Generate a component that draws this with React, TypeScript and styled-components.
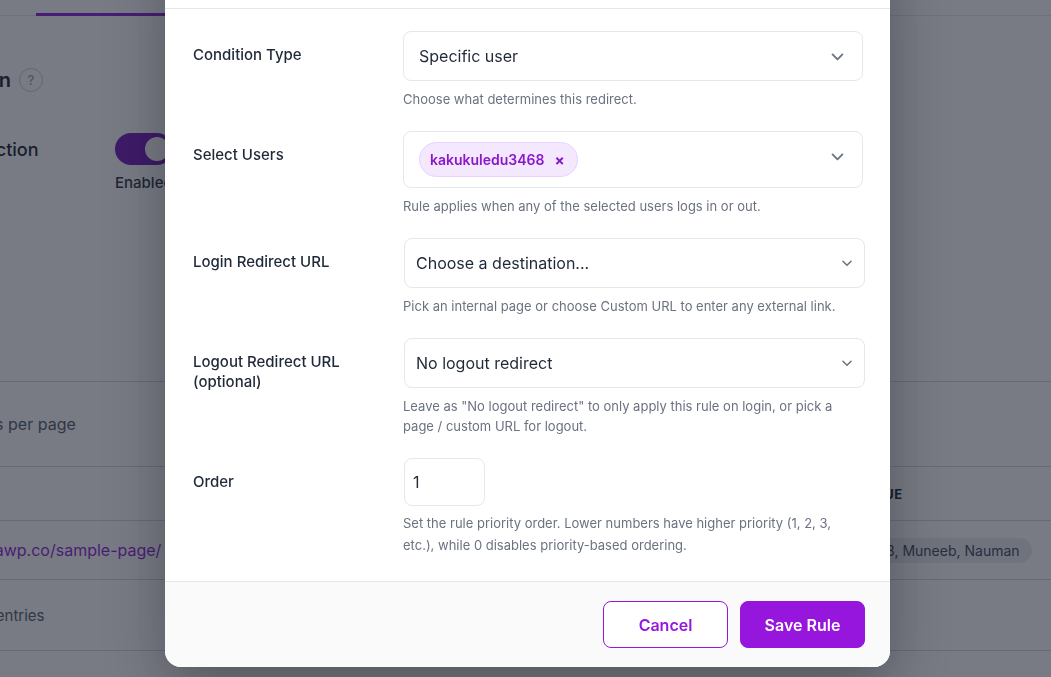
import React from 'react'
import styled, { createGlobalStyle } from 'styled-components'

const GlobalStyle = createGlobalStyle`
	* {
		box-sizing: border-box;
	}

	html,
	body {
		margin: 0;
		height: 100%;
		overflow: hidden;
	}

	body {
		font-family: Inter, 'Noto Sans', sans-serif;
		background: #fff;
		color: #1f2937;
	}
`

const purple = '#9616de'

const Page = styled.div`
	margin-left: -150px;
	width: calc(100% + 150px);
`

const TabBar = styled.div`
	margin-top: -30px;
	height: 46px;
	padding-left: 186px;
	display: flex;
	align-items: flex-end;
	border-bottom: 1px solid #e5e7eb;
`

const Tab = styled.div`
	width: 180px;
	padding-bottom: 10px;
	font-size: 15px;
	font-weight: 600;
	color: ${purple};
	border-bottom: 3px solid #8a14d9;
	margin-bottom: -1px;
`

const Settings = styled.section`
	padding: 50px 28px 0;
	height: 366px;
	border-bottom: 1px solid #d1d5db;
`

const SectionTitle = styled.h2`
	margin: 0;
	display: flex;
	align-items: center;
	gap: 8px;
	font-size: 20px;
	line-height: 28px;
	font-weight: 600;
	color: #111827;
`

const HelpDot = styled.span`
	width: 24px;
	height: 24px;
	border-radius: 50%;
	border: 1px solid #c7cbd3;
	color: #9ca3af;
	font-size: 13px;
	font-weight: 500;
	display: inline-flex;
	align-items: center;
	justify-content: center;
`

const SettingRow = styled.div`
	display: grid;
	grid-template-columns: 237px 1fr;
	margin-top: 39px;
`

const SettingLabel = styled.div`
	font-size: 18px;
	font-weight: 500;
	padding-top: 6px;
	color: #111827;
`

const ToggleBox = styled.div`
	display: flex;
	flex-direction: column;
	gap: 8px;
`

const Toggle = styled.span<{ $on: boolean }>`
	width: 58px;
	height: 32px;
	border-radius: 16px;
	background: ${p => (p.$on ? '#6d10b8' : '#d1d5db')};
	display: flex;
	align-items: center;
	justify-content: ${p => (p.$on ? 'flex-end' : 'flex-start')};
	padding: 0 4px;

	&::after {
		content: '';
		width: 24px;
		height: 24px;
		border-radius: 50%;
		background: #fff;
	}
`

const ToggleText = styled.span`
	font-size: 15px;
	font-weight: 500;
	color: #1f2937;
`

const PerPage = styled.div`
	height: 85px;
	padding: 0 28px;
	display: flex;
	align-items: center;
	font-size: 16px;
	color: #4b5563;
	border-bottom: 1px solid #d1d5db;
`

const TableRow = styled.div<{ $head?: boolean }>`
	display: grid;
	grid-template-columns: 967px 1fr;
	align-items: center;
	height: ${p => (p.$head ? '54px' : '59px')};
	padding: 0 28px;
	border-bottom: 1px solid #d1d5db;
	font-size: ${p => (p.$head ? '13px' : '15px')};
	font-weight: ${p => (p.$head ? 700 : 400)};
	letter-spacing: ${p => (p.$head ? '0.04em' : '0')};
	color: #111827;
`

const HeadCell = styled.span<{ $inset?: boolean }>`
	padding-left: ${p => (p.$inset ? '12px' : '0')};
`

const UrlLink = styled.a`
	color: #8a14d9;
	text-decoration: none;
	font-size: 16px;
	padding-left: 4px;
`

const ValuePill = styled.span`
	justify-self: start;
	padding: 4px 12px;
	border-radius: 13px;
	background: #e9ebef;
	font-size: 14px;
	color: #374151;
	white-space: nowrap;
`

const TableFooter = styled.div`
	height: 71px;
	padding: 0 28px;
	display: flex;
	align-items: center;
	font-size: 15px;
	color: #4b5563;
	border-bottom: 1px solid #d1d5db;
`

const Overlay = styled.div`
	position: fixed;
	inset: 0;
	background: rgba(30, 35, 50, 0.6);
	display: flex;
	justify-content: center;
	align-items: flex-end;
	padding: 0 0 10px 4px;
`

const Modal = styled.div`
	width: 725px;
	flex-shrink: 0;
	background: #fff;
	border-radius: 16px;
	overflow: hidden;
	display: flex;
	flex-direction: column;
	box-shadow: 0 20px 60px rgba(0, 0, 0, 0.3);
`

const ModalHeader = styled.div`
	height: 64px;
	padding: 0 28px;
	display: flex;
	align-items: center;
	justify-content: space-between;
	border-bottom: 1px solid #e5e7eb;
	font-size: 20px;
	font-weight: 600;
`

const ModalBody = styled.div`
	padding: 22px 27px 25px 28px;
	display: grid;
	grid-template-columns: 210px 1fr;
	row-gap: 22px;
`

const FieldLabel = styled.label`
	padding-top: 14px;
	font-size: 15px;
	line-height: 20px;
	font-weight: 500;
	color: #1f2937;
`

const Field = styled.div`
	display: flex;
	flex-direction: column;
	align-items: flex-start;
`

const SelectBox = styled.div<{ $native?: boolean }>`
	width: ${p => (p.$native ? '461px' : '460px')};
	margin-left: ${p => (p.$native ? '1px' : '0')};
	min-height: 50px;
	padding: ${p => (p.$native ? '0 10px 0 11px' : '0 16px 0 15px')};
	border: 1px solid #e5e7eb;
	border-radius: 8px;
	display: flex;
	align-items: center;
	justify-content: space-between;
	font-size: 16px;
	color: #1f2937;
	background: #fff;
`

const MultiBox = styled(SelectBox)`
	min-height: 57px;
	padding: 0 16px 0 15px;
	align-items: flex-start;
	padding-top: 10px;

	svg {
		margin-top: 6px;
	}
`

const Chip = styled.span`
	height: 35px;
	padding: 0 12px 0 10px;
	border-radius: 18px;
	background: #f4e8ff;
	border: 1px solid #e9d3fc;
	display: inline-flex;
	align-items: center;
	gap: 10px;
	font-size: 14px;
	font-weight: 600;
	color: #8a17c9;
`

const ChipClose = styled.span`
	font-size: 15px;
	font-weight: 700;
	line-height: 1;
	margin-top: 2px;
`

const Helper = styled.p<{ $tall?: boolean }>`
	margin: ${p => (p.$tall ? '6px' : '8px')} 0 0;
	font-size: 13px;
	line-height: ${p => (p.$tall ? '22px' : '20px')};
	color: #6b7280;
	max-width: 460px;
`

const NumberInput = styled.div`
	width: 81px;
	height: 48px;
	margin-left: 1px;
	padding-left: 8px;
	border: 1px solid #e5e7eb;
	border-radius: 8px;
	display: flex;
	align-items: center;
	font-size: 16px;
	color: #1f2937;
`

const ModalFooter = styled.div`
	height: 86px;
	padding: 0 25px;
	background: #fafafa;
	border-top: 1px solid #e5e7eb;
	display: flex;
	align-items: center;
	justify-content: flex-end;
	gap: 12px;
`

const Button = styled.button<{ $primary?: boolean }>`
	width: 125px;
	height: 47px;
	border-radius: 8px;
	font-family: inherit;
	font-size: 16px;
	font-weight: 600;
	cursor: pointer;
	border: 1px solid ${purple};
	background: ${p => (p.$primary ? purple : '#fff')};
	color: ${p => (p.$primary ? '#fff' : purple)};
`

const Chevron: React.FC<{ size?: number }> = ({ size = 16 }) => (
	<svg width={size} height={size} viewBox='0 0 24 24' fill='none' stroke='#6b7280' strokeWidth='2.6' strokeLinecap='round' strokeLinejoin='round'>
		<path d='M5 9l7 7 7-7' />
	</svg>
)

export default function App() {
	return (
		<>
			<GlobalStyle />
			<Page>
				<TabBar>
					<Tab>Redirect Rules</Tab>
				</TabBar>
				<Settings>
					<SectionTitle>
						Configuration <HelpDot>?</HelpDot>
					</SectionTitle>
					<SettingRow>
						<SettingLabel>Enable Redirection</SettingLabel>
						<ToggleBox>
							<Toggle $on />
							<ToggleText>Enabled</ToggleText>
						</ToggleBox>
					</SettingRow>
				</Settings>
				<PerPage>Show 10 records per page</PerPage>
				<TableRow $head>
					<HeadCell>URL</HeadCell>
					<HeadCell $inset>VALUE</HeadCell>
				</TableRow>
				<TableRow>
					<UrlLink href='#'>https://dev.instawp.co/sample-page/</UrlLink>
					<ValuePill>user3, Muneeb, Nauman</ValuePill>
				</TableRow>
				<TableFooter>Showing 1-1 of 1 entries</TableFooter>
			</Page>

			<Overlay>
				<Modal>
					<ModalHeader>Edit Redirect Rule</ModalHeader>
					<ModalBody>
						<FieldLabel>Condition Type</FieldLabel>
						<Field>
							<SelectBox>
								<span>Specific user</span>
								<Chevron size={17} />
							</SelectBox>
							<Helper>Choose what determines this redirect.</Helper>
						</Field>

						<FieldLabel>Select Users</FieldLabel>
						<Field>
							<MultiBox>
								<Chip>
									kakukuledu3468 <ChipClose>×</ChipClose>
								</Chip>
								<Chevron size={17} />
							</MultiBox>
							<Helper>Rule applies when any of the selected users logs in or out.</Helper>
						</Field>

						<FieldLabel>Login Redirect URL</FieldLabel>
						<Field>
							<SelectBox $native>
								<span>Choose a destination...</span>
								<Chevron size={14} />
							</SelectBox>
							<Helper>Pick an internal page or choose Custom URL to enter any external link.</Helper>
						</Field>

						<FieldLabel>
							Logout Redirect URL
							<br />
							(optional)
						</FieldLabel>
						<Field>
							<SelectBox $native>
								<span>No logout redirect</span>
								<Chevron size={14} />
							</SelectBox>
							<Helper>
								Leave as "No logout redirect" to only apply this rule on login, or pick a page / custom URL for logout.
							</Helper>
						</Field>

						<FieldLabel>Order</FieldLabel>
						<Field>
							<NumberInput>1</NumberInput>
							<Helper $tall>
								Set the rule priority order. Lower numbers have higher priority (1, 2, 3, etc.), while 0 disables priority-based ordering.
							</Helper>
						</Field>
					</ModalBody>
					<ModalFooter>
						<Button>Cancel</Button>
						<Button $primary>Save Rule</Button>
					</ModalFooter>
				</Modal>
			</Overlay>
		</>
	)
}
